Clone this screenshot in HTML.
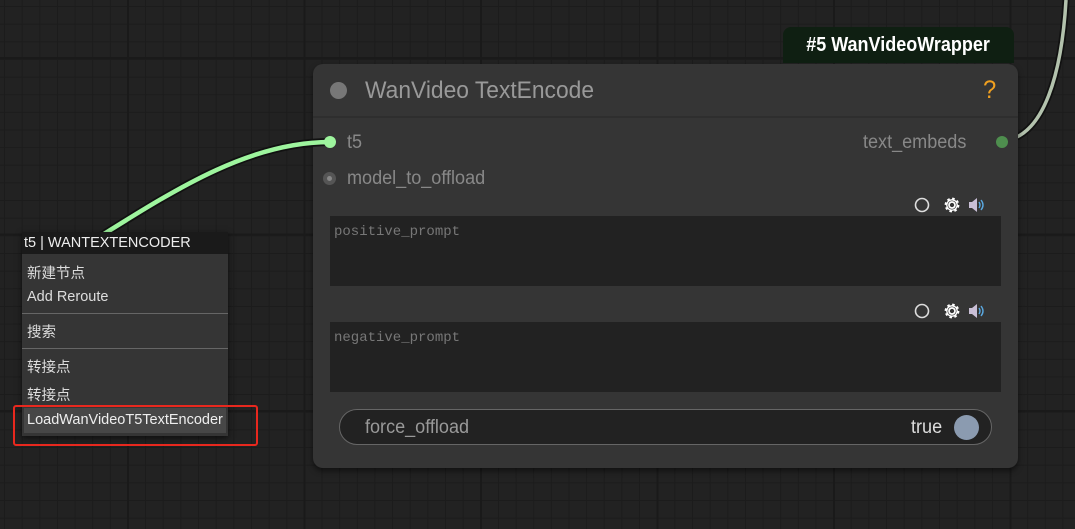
<!DOCTYPE html>
<html><head><meta charset="utf-8"><style>
*{margin:0;padding:0;box-sizing:border-box}
body{width:1075px;height:529px;overflow:hidden;position:relative;font-family:"Liberation Sans","Noto Sans CJK SC",sans-serif;
background-color:#222;
background-image:
linear-gradient(90deg,#1a1a1a 2px,transparent 2px),
linear-gradient(0deg,#1a1a1a 2px,transparent 2px),
linear-gradient(90deg,#1c1c1c 1px,transparent 1px),
linear-gradient(0deg,#1c1c1c 1px,transparent 1px);
background-size:176.5px 176.5px,176.5px 176.5px,17.65px 17.65px,17.65px 17.65px;
background-position:127px 0,0 59px,4px 0,0 7px;}
.abs{position:absolute}
.node{left:313px;top:64px;width:705px;height:404px;background:#353535;border-radius:10px;box-shadow:0 3px 6px rgba(0,0,0,.5)}
.t{position:absolute;font-size:19px;color:#888;white-space:nowrap;line-height:1;transform-origin:0 0;transform:scaleX(.95)}
.ta{position:absolute;left:17px;width:671px;height:70px;background:#222;font-family:"Liberation Mono",monospace;font-size:14px;color:#777;padding:8px 4px}
.icons{position:absolute;left:600px;width:80px;height:20px}
.m{position:absolute;left:5px;font-size:14.5px}
</style></head><body>
<svg class="abs" style="left:0;top:0" width="1075" height="529">
<path d="M1002 141 C1045 138,1062 70,1066 0" stroke="#111" stroke-width="7" fill="none"/>
<path d="M1002 141 C1045 138,1062 70,1066 0" stroke="#b3c2ad" stroke-width="3.5" fill="none"/>
</svg>
<div class="abs" style="left:783px;top:27px;width:231px;height:36px;background:#0f1f12;border-radius:8px 8px 0 0;color:#fff;font-weight:bold;font-size:20px;line-height:36px;text-align:center"><span style="display:inline-block;transform:scaleX(.9)">#5 WanVideoWrapper</span></div>
<div class="abs node">
 <div class="abs" style="left:0;top:52px;width:705px;height:2px;background:#2e2e2e"></div>
 <div class="abs" style="left:17px;top:18px;width:17px;height:17px;border-radius:50%;background:#777"></div>
 <div class="t" style="left:52px;top:15px;font-size:24px;color:#999">WanVideo TextEncode</div>
 <div class="t" style="left:670px;top:14px;font-size:25px;color:#f0a020">?</div>
 <div class="t" style="left:34px;top:69px">t5</div>
 <div class="abs" style="left:10px;top:108px;width:13px;height:13px;border-radius:50%;background:#555;border:4px solid #555"><div style="width:5px;height:5px;margin:0;background:#888;border-radius:50%"></div></div>
 <div class="t" style="left:34px;top:105px">model_to_offload</div>
 <div class="t" style="left:550px;top:69px">text_embeds</div>
 <div class="abs" style="left:683px;top:72px;width:12px;height:12px;border-radius:50%;background:#4e8e4e"></div>
 <div class="icons" style="top:131px">
  <svg width="80" height="20"><circle cx="9" cy="10" r="6.5" stroke="#ddd" stroke-width="1.6" fill="none"/>
  <g transform="translate(39,10)"><circle r="3" stroke="#fff" stroke-width="1.7" fill="none"/><circle r="6" stroke="#fff" stroke-width="2.8" fill="none" stroke-dasharray="2.4 2.3"/><circle r="5.2" stroke="#fff" stroke-width="1.3" fill="none"/></g>
  <path d="M56 7h3l5-4v14l-5-4h-3z" fill="#c9bfd6"/><path d="M66 7q2 3 0 6M68 5q4 5 0 10" stroke="#5aa8e0" stroke-width="1.4" fill="none"/></svg>
 </div>
 <div class="ta" style="top:152px">positive_prompt</div>
 <div class="icons" style="top:237px">
  <svg width="80" height="20"><circle cx="9" cy="10" r="6.5" stroke="#ddd" stroke-width="1.6" fill="none"/>
  <g transform="translate(39,10)"><circle r="3" stroke="#fff" stroke-width="1.7" fill="none"/><circle r="6" stroke="#fff" stroke-width="2.8" fill="none" stroke-dasharray="2.4 2.3"/><circle r="5.2" stroke="#fff" stroke-width="1.3" fill="none"/></g>
  <path d="M56 7h3l5-4v14l-5-4h-3z" fill="#c9bfd6"/><path d="M66 7q2 3 0 6M68 5q4 5 0 10" stroke="#5aa8e0" stroke-width="1.4" fill="none"/></svg>
 </div>
 <div class="ta" style="top:258px">negative_prompt</div>
 <div class="abs" style="left:26px;top:345px;width:653px;height:36px;border:1.5px solid #666;border-radius:18px;background:#222">
  <div class="t" style="left:25px;top:8px;color:#999">force_offload</div>
  <div class="t" style="left:571px;top:8px;color:#ddd">true</div>
  <div class="abs" style="left:614px;top:5px;width:25px;height:25px;border-radius:50%;background:#8b9bb0"></div>
 </div>
</div>
<svg class="abs" style="left:0;top:0" width="1075" height="529">
<path d="M70 255 C160 200,240 142,330 142" stroke="#111" stroke-width="8" fill="none"/>
<path d="M70 255 C160 200,240 142,330 142" stroke="#9ef59e" stroke-width="4.5" fill="none"/>
<circle cx="330" cy="142" r="6" fill="#9ef59e"/>
</svg>
<div class="abs" style="left:22px;top:232px;width:206px;height:204px;background:#353535;box-shadow:0 2px 6px rgba(0,0,0,.6);color:#ddd">
 <div style="height:22px;background:#1a1a1a;color:#eee;padding:3px 2px;line-height:16px;font-size:14.5px">t5 | WANTEXTENCODER</div>
 <div class="m" style="top:30px">新建节点</div>
 <div class="m" style="top:57px">Add Reroute</div>
 <div class="abs" style="left:0;top:81px;width:206px;height:1px;background:#666"></div>
 <div class="m" style="top:89px">搜索</div>
 <div class="abs" style="left:0;top:116px;width:206px;height:1px;background:#666"></div>
 <div class="m" style="top:124px">转接点</div>
 <div class="m" style="top:152px">转接点</div>
 <div class="abs" style="left:2px;top:176px;width:202px;height:25px;background:#474747;padding:4px 3px;color:#eee;font-size:14.5px">LoadWanVideoT5TextEncoder</div>
</div>
<div class="abs" style="left:13px;top:405px;width:245px;height:41px;border:2px solid #e8281e;border-radius:3px"></div>
</body></html>
